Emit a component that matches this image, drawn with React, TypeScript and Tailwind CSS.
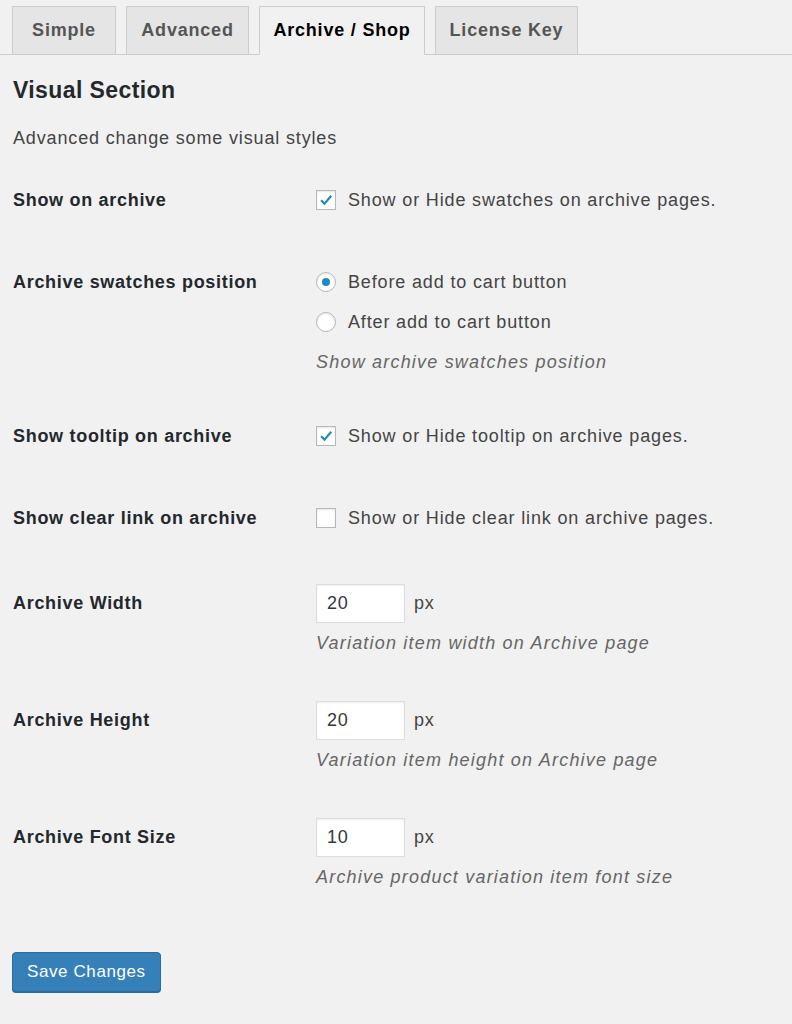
import { ReactNode } from "react";

const tabs = [
  { label: "Simple", w: "w-[104px]" },
  { label: "Advanced", w: "w-[123px]" },
  { label: "Archive / Shop", w: "w-[166px]", active: true },
  { label: "License Key", w: "w-[143px]" },
];

function Row({ label, className, children }: { label: string; className?: string; children: ReactNode }) {
  return (
    <div className={`flex ${className ?? ""}`}>
      <div className="flex h-10 w-[303px] shrink-0 items-center text-[18px] font-bold tracking-[0.7px] text-[#23282d]">{label}</div>
      <div className="flex flex-col">{children}</div>
    </div>
  );
}

function Check({ checked, text }: { checked?: boolean; text: string }) {
  return (
    <label className="flex h-10 items-center gap-3">
      <span className="flex h-5 w-5 items-center justify-center border border-[#b4b9be] bg-white shadow-[inset_0_1px_2px_rgba(0,0,0,0.1)]">
        {checked && (
          <svg viewBox="0 0 20 20" className="h-5 w-5">
            <path d="M4.5 10.2 L8.3 14 L15.8 5.2" fill="none" stroke="#1e8cbe" strokeWidth="2.4" />
          </svg>
        )}
      </span>
      <span>{text}</span>
    </label>
  );
}

function Radio({ checked, text }: { checked?: boolean; text: string }) {
  return (
    <label className="flex h-10 items-center gap-3">
      <span className="flex h-5 w-5 items-center justify-center rounded-full border border-[#b4b9be] bg-white shadow-[inset_0_1px_2px_rgba(0,0,0,0.1)]">
        {checked && <span className="h-2 w-2 rounded-full bg-[#1e8cbe]" />}
      </span>
      <span>{text}</span>
    </label>
  );
}

function Desc({ children }: { children: ReactNode }) {
  return <p className="flex h-10 items-center italic tracking-[1.2px] text-[#666]">{children}</p>;
}

function NumberField({ value, desc }: { value: string; desc: string }) {
  return (
    <>
      <div className="flex h-10 items-center gap-[9px]">
        <input
          defaultValue={value}
          className="h-[39px] w-[89px] border border-[#ddd] bg-white px-[10px] text-[18px] text-[#32373c] shadow-[inset_0_1px_2px_rgba(0,0,0,0.07)] outline-none"
        />
        <span>px</span>
      </div>
      <Desc>{desc}</Desc>
    </>
  );
}

export default function App() {
  return (
    <div
      className="min-h-screen bg-[#f1f1f1] pb-10 text-[18px] tracking-[0.85px] text-[#444]"
      style={{ fontFamily: '"Liberation Sans", Arial, sans-serif' }}
    >
      <div className="flex items-end gap-[10px] border-b border-[#ccc] pl-[12px] pt-[6px]">
        {tabs.map((t) => (
          <div
            key={t.label}
            className={`-mb-px flex h-[49px] ${t.w} items-center justify-center border border-[#ccc] text-[18px] font-bold tracking-[0.8px] ${
              t.active ? "border-b-[#f1f1f1] bg-[#f1f1f1] text-black" : "bg-[#e5e5e5] text-[#555]"
            }`}
          >
            {t.label}
          </div>
        ))}
      </div>

      <div className="px-[13px]">
        <h2 className="mt-[20px] text-[23px] font-bold leading-[30px] tracking-[0.4px] text-[#23282d]">Visual Section</h2>
        <p className="mt-[18px] leading-[30px]">Advanced change some visual styles</p>

        <Row label="Show on archive" className="mt-[27px]">
          <Check checked text="Show or Hide swatches on archive pages." />
        </Row>

        <Row label="Archive swatches position" className="mt-[42px]">
          <Radio checked text="Before add to cart button" />
          <Radio text="After add to cart button" />
          <Desc>Show archive swatches position</Desc>
        </Row>

        <Row label="Show tooltip on archive" className="mt-[34px]">
          <Check checked text="Show or Hide tooltip on archive pages." />
        </Row>

        <Row label="Show clear link on archive" className="mt-[42px]">
          <Check text="Show or Hide clear link on archive pages." />
        </Row>

        <Row label="Archive Width" className="mt-[45px]">
          <NumberField value="20" desc="Variation item width on Archive page" />
        </Row>

        <Row label="Archive Height" className="mt-[37px]">
          <NumberField value="20" desc="Variation item height on Archive page" />
        </Row>

        <Row label="Archive Font Size" className="mt-[37px]">
          <NumberField value="10" desc="Archive product variation item font size" />
        </Row>

        <button className="mt-[55px] -ml-px h-[40px] rounded-[4px] border border-[#2a6b9c] bg-[#3580b8] px-[14px] text-[17px] tracking-[0.6px] text-white shadow-[0_1px_0_#2a6b9c]">
          Save Changes
        </button>
      </div>
    </div>
  );
}
